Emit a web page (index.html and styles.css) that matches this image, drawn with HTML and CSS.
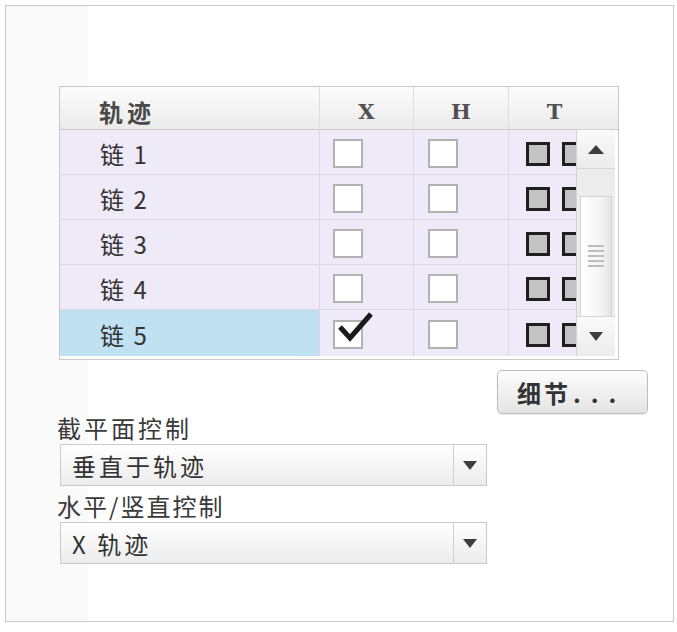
FILE: index.html
```html
<!DOCTYPE html>
<html lang="zh">
<head>
<meta charset="utf-8">
<link rel="stylesheet" href="styles.css">
</head>
<body>
<div class="frame">
  <div class="content">
    <div class="table">
      <div class="thead">
        <div class="th c1 cjk">轨迹</div>
        <div class="th c2 latin">X</div>
        <div class="th c3 latin">H</div>
        <div class="th c4 latin">T</div>
      </div>
      <div class="tbody">
        <div class="viewport">
          <div class="row">
            <div class="td c1">链 1</div>
            <div class="td c2"><span class="cb"></span></div>
            <div class="td c3"><span class="cb"></span></div>
            <div class="td c4"><span class="sq"></span><span class="sq"></span></div>
          </div>
          <div class="row">
            <div class="td c1">链 2</div>
            <div class="td c2"><span class="cb"></span></div>
            <div class="td c3"><span class="cb"></span></div>
            <div class="td c4"><span class="sq"></span><span class="sq"></span></div>
          </div>
          <div class="row">
            <div class="td c1">链 3</div>
            <div class="td c2"><span class="cb"></span></div>
            <div class="td c3"><span class="cb"></span></div>
            <div class="td c4"><span class="sq"></span><span class="sq"></span></div>
          </div>
          <div class="row">
            <div class="td c1">链 4</div>
            <div class="td c2"><span class="cb"></span></div>
            <div class="td c3"><span class="cb"></span></div>
            <div class="td c4"><span class="sq"></span><span class="sq"></span></div>
          </div>
          <div class="row last">
            <div class="td c1 sel">链 5</div>
            <div class="td c2"><span class="cb checked"><svg class="check" width="40" height="36" viewBox="0 0 40 36"><path d="M4 16 L14 27 L35 3" fill="none" stroke="#1a1a1a" stroke-width="5" stroke-linejoin="miter"/></svg></span></div>
            <div class="td c3"><span class="cb"></span></div>
            <div class="td c4"><span class="sq"></span><span class="sq"></span></div>
          </div>
        </div>
        <div class="scrollbar">
          <div class="sbtn"><span class="tri-up"></span></div>
          <div class="track">
            <div class="thumb"><span class="grip"></span></div>
          </div>
          <div class="sbtn down"><span class="tri-down"></span></div>
        </div>
      </div>
    </div>
    <div class="btnrow">
      <button class="btn">细节<span class="dots">...</span></button>
    </div>
    <div class="label">截平面控制</div>
    <div class="select">
      <span class="val">垂直于轨迹</span>
      <span class="arrow"><span class="tri-down"></span></span>
    </div>
    <div class="label second">水平/竖直控制</div>
    <div class="select">
      <span class="val">X 轨迹</span>
      <span class="arrow"><span class="tri-down"></span></span>
    </div>
  </div>
</div>
</body>
</html>
```
FILE: styles.css
```css
* { box-sizing: border-box; }
html, body { margin: 0; padding: 0; background: #fff; }
body {
  font-family: "Noto Sans CJK SC", "DejaVu Sans", sans-serif;
  color: #333;
}
.frame {
  margin: 5px 0 0 5px;
  width: 669px;
  height: 617px;
  border: 1px solid #cacaca;
  background: linear-gradient(to right, #fafafa 82px, #ffffff 82px);
  padding: 80px 0 0 53px;
}
.content {
  width: 589px;
  display: flex;
  flex-direction: column;
}
.table {
  width: 560px;
  border: 1px solid #c9c9c9;
  background: #fff;
}
.thead {
  display: flex;
  height: 43px;
  border-bottom: 1px solid #cdcdcd;
  background: linear-gradient(to bottom, #fcfcfc, #ebebeb);
}
.th {
  display: flex;
  align-items: center;
  justify-content: center;
  color: #4a4a4a;
  border-right: 1px solid #dedede;
  padding-top: 6px;
}
.th.cjk {
  justify-content: flex-start;
  padding-left: 39px;
  font-weight: 700;
  font-size: 24px;
  letter-spacing: 4px;
}
.th.latin {
  font-family: "DejaVu Serif", "Liberation Serif", serif;
  font-weight: 700;
  font-size: 21px;
  color: #505050;
}
.th.c4 { border-right: none; padding-right: 18px; }
.c1 { width: 260px; flex: none; }
.c2 { width: 94px; flex: none; }
.c3 { width: 95px; flex: none; }
.c4 { width: 95px; flex: none; }
.th.c4 { flex: 1; }
.tbody {
  display: flex;
  height: 230px;
  margin-top: -1px;
}
.viewport {
  width: 516px;
  height: 227px;
  overflow: hidden;
  padding-top: 1px;
}
.row {
  display: flex;
  width: 544px;
  height: 45px;
  border-bottom: 1px solid #dcd7e3;
  background: #efeaf7;
}
.row.last { height: 46px; border-bottom: none; }
.td {
  display: flex;
  align-items: center;
  border-right: 1px solid #dcd7e3;
  font-size: 24px;
}
.td.c1 {
  padding-left: 40px;
  letter-spacing: 2px;
  padding-top: 2px;
}
.td.sel { background: #bfe1f1; }
.td.c2, .td.c3 { justify-content: flex-start; padding-top: 3px; }
.td.c2 { padding-left: 13px; }
.td.c3 { padding-left: 14px; }
.td.c4 { border-right: none; padding-left: 17px; gap: 12px; padding-top: 3px; }
.cb {
  position: relative;
  display: block;
  width: 30px;
  height: 29px;
  background: #fff;
  border: 2px solid #b2b2b2;
}
.check {
  position: absolute;
  left: 1px;
  top: -11px;
}
.sq {
  display: block;
  width: 24px;
  height: 24px;
  background: #c3c3c3;
  border: 3px solid #1f1f1f;
  flex: none;
}
.scrollbar {
  width: 39px;
  display: flex;
  flex-direction: column;
  background: #ececec;
  border-left: 1px solid #d3d3d3;
  border-top: 1px solid #d3d3d3;
  height: 227px;
}
.sbtn {
  height: 39px;
  display: flex;
  align-items: center;
  justify-content: center;
  background: linear-gradient(to bottom, #fafafa, #ececec);
  border-bottom: 1px solid #d6d6d6;
  flex: none;
}
.sbtn.down { border-bottom: none; border-top: 1px solid #d6d6d6; height: 40px; }
.tri-up {
  width: 0; height: 0;
  border-left: 8px solid transparent;
  border-right: 8px solid transparent;
  border-bottom: 9px solid #3e3e3e;
}
.tri-down {
  width: 0; height: 0;
  border-left: 7px solid transparent;
  border-right: 7px solid transparent;
  border-top: 9px solid #3e3e3e;
}
.track {
  flex: 1;
  padding: 27px 3px 0 3px;
  display: flex;
  flex-direction: column;
}
.thumb {
  flex: 1;
  background: linear-gradient(to right, #ffffff, #f3f3f3 70%, #e4e4e4);
  border: 1px solid #d2d2d2;
  border-bottom: none;
  display: flex;
  align-items: center;
  justify-content: center;
}
.grip {
  display: block;
  width: 16px;
  height: 23px;
  background: repeating-linear-gradient(to bottom, #bdbdbd 0 2px, transparent 2px 5px);
}
.btnrow {
  display: flex;
  justify-content: flex-end;
  margin-top: 10px;
}
.btn {
  width: 151px;
  height: 44px;
  border: 1px solid #bcbcbc;
  border-radius: 5px;
  background: linear-gradient(to bottom, #fdfdfd, #e4e4e4);
  box-shadow: 0 1px 1px rgba(0,0,0,0.08);
  font-family: "Noto Sans CJK SC", sans-serif;
  font-weight: 700;
  font-size: 24px;
  color: #333;
  letter-spacing: 3px;
  padding: 0 0 0 19px;
  text-align: left;
  display: flex;
  align-items: center;
}
.dots { letter-spacing: 10px; margin-left: 2px; font-weight: 700; }
.label {
  font-size: 24px;
  line-height: 28px;
  letter-spacing: 3px;
  margin-left: -2px;
  color: #3a3a3a;
  margin-top: 0;
}
.label.second { margin-top: 6px; letter-spacing: 2px; }
.select {
  display: flex;
  width: 427px;
  height: 42px;
  margin-top: 2px;
  margin-left: 1px;
  border: 1px solid #cacaca;
  background: linear-gradient(to bottom, #ffffff, #ececec);
}
.val {
  flex: 1;
  padding-left: 11px;
  display: flex;
  align-items: center;
  font-size: 24px;
  letter-spacing: 3px;
  color: #333;
}
.arrow {
  width: 33px;
  flex: none;
  border-left: 1px solid #d0d0d0;
  display: flex;
  align-items: center;
  justify-content: center;
}
```
